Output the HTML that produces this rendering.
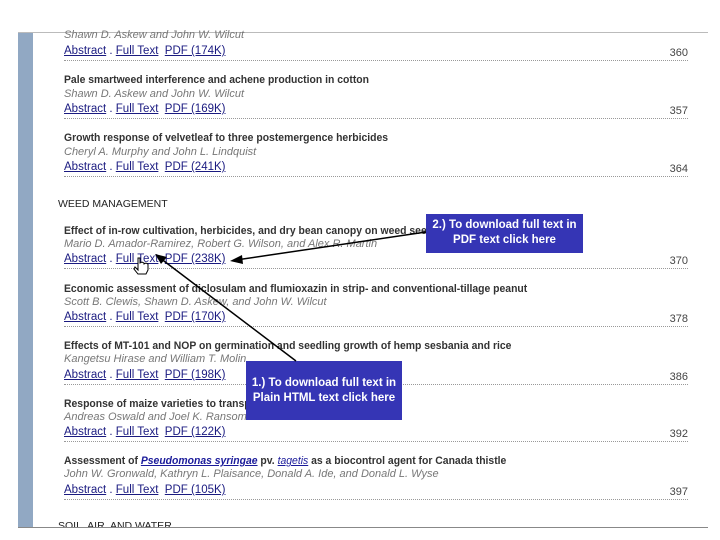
<!DOCTYPE html>
<html><head><meta charset="utf-8"><style>
body{margin:0;width:720px;height:540px;background:#fff;position:relative;overflow:hidden;font-family:"Liberation Sans",sans-serif;font-size:11px}
.a{position:absolute;white-space:nowrap}
.t{font-weight:bold;color:#333;font-size:11px;transform:scaleX(0.945);transform-origin:0 0}
.au{font-style:italic;color:#777;font-size:11px}
.l{color:#1a1a80;font-size:11.5px}
.l u{text-decoration:underline}
.dl{position:absolute;left:64px;width:624px;border-top:1px dotted #999;height:0}
.pn{position:absolute;right:32px;color:#444;font-size:11px}
.box{position:absolute;background:#3535b5;color:#fff;font-weight:bold;font-size:11.5px;text-align:center;line-height:15px;box-sizing:border-box}
.sec{color:#222;font-size:10.5px}
</style></head><body>
<div style="position:absolute;left:18px;top:32px;width:690px;height:1px;background:#bbb"></div>
<div style="position:absolute;left:18px;top:33px;width:15px;height:494px;background:#91a8c3"></div>
<div style="position:absolute;left:18px;top:527px;width:690px;height:1px;background:#888"></div>

<div class="a au" style="left:64px;top:29px">Shawn D. Askew and John W. Wilcut</div>
<div class="a l" style="left:64px;top:45px"><u>Abstract</u> . <u>Full Text</u>&nbsp; <u>PDF (174K)</u></div>
<div class="pn" style="top:47px">360</div><div class="dl" style="top:60px"></div>

<div class="a t" style="left:64px;top:74px">Pale smartweed interference and achene production in cotton</div>
<div class="a au" style="left:64px;top:88px">Shawn D. Askew and John W. Wilcut</div>
<div class="a l" style="left:64px;top:103px"><u>Abstract</u> . <u>Full Text</u>&nbsp; <u>PDF (169K)</u></div>
<div class="pn" style="top:105px">357</div><div class="dl" style="top:118px"></div>

<div class="a t" style="left:64px;top:132px">Growth response of velvetleaf to three postemergence herbicides</div>
<div class="a au" style="left:64px;top:146px">Cheryl A. Murphy and John L. Lindquist</div>
<div class="a l" style="left:64px;top:161px"><u>Abstract</u> . <u>Full Text</u>&nbsp; <u>PDF (241K)</u></div>
<div class="pn" style="top:163px">364</div><div class="dl" style="top:176px"></div>

<div class="a sec" style="left:58px;top:198px">WEED MANAGEMENT</div>

<div class="a t" style="left:64px;top:225px">Effect of in-row cultivation, herbicides, and dry bean canopy on weed seedbank</div>
<div class="a au" style="left:64px;top:238px">Mario D. Amador-Ramirez, Robert G. Wilson, and Alex R. Martin</div>
<div class="a l" style="left:64px;top:253px"><u>Abstract</u> . <u>Full Text</u>&nbsp; <u>PDF (238K)</u></div>
<div class="pn" style="top:255px">370</div><div class="dl" style="top:268px"></div>

<div class="a t" style="left:64px;top:283px">Economic assessment of diclosulam and flumioxazin in strip- and conventional-tillage peanut</div>
<div class="a au" style="left:64px;top:296px">Scott B. Clewis, Shawn D. Askew, and John W. Wilcut</div>
<div class="a l" style="left:64px;top:311px"><u>Abstract</u> . <u>Full Text</u>&nbsp; <u>PDF (170K)</u></div>
<div class="pn" style="top:313px">378</div><div class="dl" style="top:326px"></div>

<div class="a t" style="left:64px;top:340px">Effects of MT-101 and NOP on germination and seedling growth of hemp sesbania and rice</div>
<div class="a au" style="left:64px;top:353px">Kangetsu Hirase and William T. Molin</div>
<div class="a l" style="left:64px;top:369px"><u>Abstract</u> . <u>Full Text</u>&nbsp; <u>PDF (198K)</u></div>
<div class="pn" style="top:371px">386</div><div class="dl" style="top:384px"></div>

<div class="a t" style="left:64px;top:398px">Response of maize varieties to transplanting</div>
<div class="a au" style="left:64px;top:411px">Andreas Oswald and Joel K. Ransom</div>
<div class="a l" style="left:64px;top:426px"><u>Abstract</u> . <u>Full Text</u>&nbsp; <u>PDF (122K)</u></div>
<div class="pn" style="top:428px">392</div><div class="dl" style="top:441px"></div>

<div class="a t" style="left:64px;top:455px">Assessment of <i style="color:#1a1a9a;text-decoration:underline">Pseudomonas syringae</i> pv. <i style="color:#1a1a9a;text-decoration:underline;font-weight:normal">tagetis</i> as a biocontrol agent for Canada thistle</div>
<div class="a au" style="left:64px;top:468px">John W. Gronwald, Kathryn L. Plaisance, Donald A. Ide, and Donald L. Wyse</div>
<div class="a l" style="left:64px;top:484px"><u>Abstract</u> . <u>Full Text</u>&nbsp; <u>PDF (105K)</u></div>
<div class="pn" style="top:486px">397</div><div class="dl" style="top:499px"></div>

<div style="position:absolute;left:58px;top:519px;height:8px;overflow:hidden"><div class="sec" style="line-height:14px">SOIL, AIR, AND WATER</div></div>

<div class="box" style="left:426px;top:214px;width:157px;height:39px;padding-top:4px">2.) To download full text in<br>PDF text click here</div>
<div class="box" style="left:246px;top:361px;width:156px;height:59px;padding-top:15px">1.) To download full text in<br>Plain HTML text click here</div>

<svg style="position:absolute;left:0;top:0" width="720" height="540">
<line x1="426" y1="232" x2="236" y2="260" stroke="#000" stroke-width="1.5"/>
<polygon points="230,261 242,255 243,264" fill="#000"/>
<line x1="296" y1="361" x2="160" y2="258" stroke="#000" stroke-width="1.5"/>
<polygon points="155,254 167,257 161,264" fill="#000"/>
<path d="M138 258 v12 l-3 -3 l-1 2 l4 5 h8 l2 -4 v-6 l-2 -1 l-2 1 v-1 l-2 -1 l-2 1 v-5 z" fill="#fff" stroke="#000" stroke-width="1"/>
</svg>
</body></html>
